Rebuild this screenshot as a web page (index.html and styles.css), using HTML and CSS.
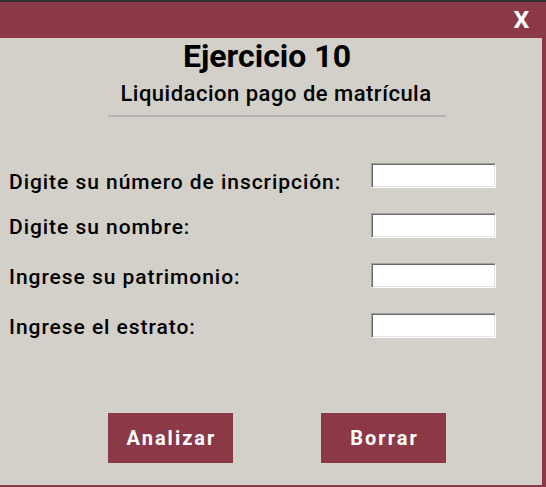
FILE: index.html
```html
<!DOCTYPE html>
<html lang="es">
<head>
<meta charset="utf-8">
<title>Ejercicio 10</title>
<link rel="stylesheet" href="styles.css">
</head>
<body>
<div class="window">
  <div class="titlebar">
    <span class="close">X</span>
  </div>
  <div class="content">
    <h1 class="title">Ejercicio 10</h1>
    <h2 class="subtitle">Liquidacion pago de matrícula</h2>
    <hr class="rule">
    <form class="form">
      <label class="label first" for="f1">Digite su número de inscripción:</label>
      <input class="field" id="f1" type="text">
      <label class="label" for="f2">Digite su nombre:</label>
      <input class="field" id="f2" type="text">
      <label class="label" for="f3">Ingrese su patrimonio:</label>
      <input class="field" id="f3" type="text">
      <label class="label" for="f4">Ingrese el estrato:</label>
      <input class="field" id="f4" type="text">
    </form>
    <div class="actions">
      <button class="btn" type="button">Analizar</button>
      <button class="btn" type="button">Borrar</button>
    </div>
  </div>
</div>
</body>
</html>
```

FILE: styles.css
```css
* { box-sizing: border-box; }
html, body {
  margin: 0;
  padding: 0;
  background: #d3d0ca;
}
.window {
  width: 546px;
  height: 487px;
  display: flex;
  flex-direction: column;
  font-family: Roboto, "Liberation Sans", sans-serif;
  color: #000;
}
.titlebar {
  height: 38px;
  border-top: 2px solid #2f2f2f;
  background: #8c3947;
  display: flex;
  justify-content: flex-end;
  align-items: center;
  padding-right: 17px;
}
.close {
  color: #fff;
  font-weight: 700;
  font-size: 23px;
  line-height: 22px;
  margin-top: 1px;
  transform: scaleX(1.08);
}
.content {
  flex: 1;
  display: flex;
  flex-direction: column;
  border-right: 4px solid #8c3947;
  border-bottom: 2px solid #8c3947;
}
.title {
  margin: 0;
  font-size: 32px;
  font-weight: 700;
  line-height: 36px;
  text-align: center;
  padding-right: 8px;
}
.subtitle {
  margin: 7px 0 0;
  font-size: 22px;
  font-weight: 500;
  line-height: 26px;
  letter-spacing: 0.5px;
  text-align: center;
  padding-left: 10px;
}
.rule {
  margin: 8px 0 0 108px;
  width: 338px;
  height: 2px;
  border: 0;
  background: #b4b4b4;
}
.form {
  margin: 46px 0 0;
  padding-left: 9px;
  display: grid;
  grid-template-columns: 362px 125px;
  grid-auto-rows: 25px;
  row-gap: 25px;
}
.label {
  align-self: start;
  font-size: 21px;
  font-weight: 500;
  line-height: 29px;
  letter-spacing: 0.95px;
  white-space: nowrap;
}
.label.first {
  margin-top: 5px;
}
.field {
  width: 125px;
  height: 25px;
  margin: 0;
  padding: 0 3px;
  background: #fff;
  border: 1px solid;
  border-color: #a0a0a0 #ffffff #ffffff #a0a0a0;
  box-shadow: inset 1px 1px 0 #696969, inset -1px -1px 0 #e3e3e3;
  outline: none;
}
.actions {
  margin-top: 75px;
  padding-left: 108px;
  display: flex;
  gap: 88px;
}
.btn {
  width: 125px;
  height: 50px;
  border: 0;
  margin: 0;
  padding: 0 0 0 2px;
  background: #8c3947;
  color: #fff;
  font-family: Roboto, "Liberation Sans", sans-serif;
  font-size: 20px;
  font-weight: 700;
  letter-spacing: 2px;
}
```
